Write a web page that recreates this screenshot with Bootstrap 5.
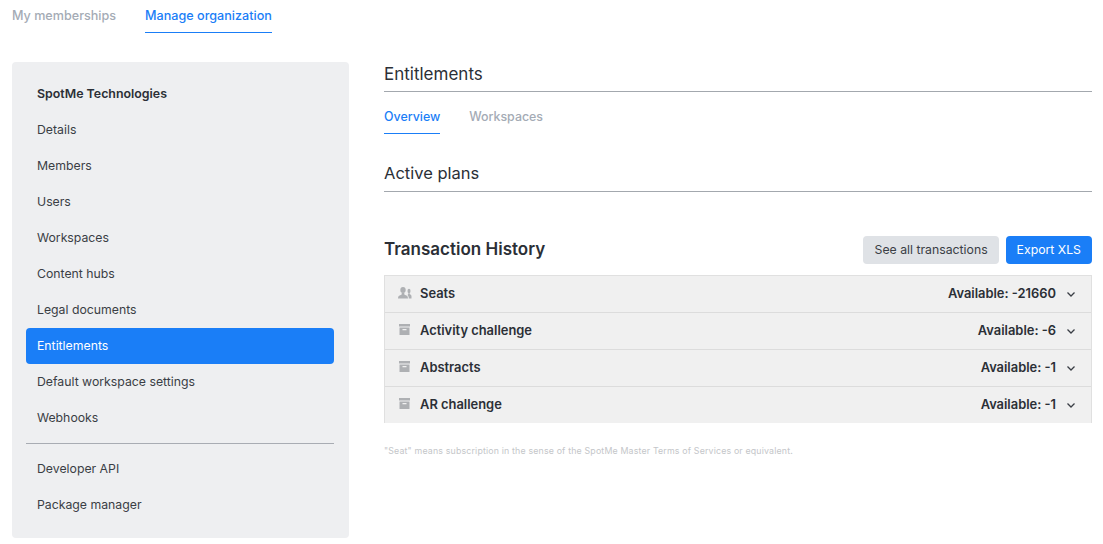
<!DOCTYPE html>
<html lang="en">
<head>
<meta charset="utf-8">
<title>Entitlements</title>
<link href="https://cdn.jsdelivr.net/npm/bootstrap@5.3.0/dist/css/bootstrap.min.css" rel="stylesheet">
<style>
body{font-family:Inter,"Liberation Sans",sans-serif;font-size:13px;color:#2b2f36;background:#fff;overflow:hidden}
.app-shell{padding:0 11px 0 12px;width:1103px;height:544px}
.tab-strip{gap:29px}
.tab-strip a{display:block;text-decoration:none;font-weight:500;font-size:12.6px;color:#a4abb5;line-height:16px}
.tab-strip a.on{color:#1a7ef7;border-bottom:1px solid #1a7ef7}
.top-tabs a{padding:8px 0 8px}
.top-tabs{height:33px}
.side-panel{width:337px;height:476px;margin-top:29px;background:#eeeff1;border-radius:4px;padding:14px 15px 14px 14px;flex:none}
.side-link{display:block;height:36px;line-height:35px;padding-left:11px;font-size:12.27px;color:#3a3e45;text-decoration:none;border-radius:4px}
.side-link.head{font-weight:600;font-size:12.4px;color:#2b2f36}
.side-link.on{background:#1a7ef7;color:#fff}
.side-rule{border:0;border-top:1px solid #a8acb3;opacity:1;margin:7px 0 6px}
.side-rule + .side-link, .side-rule + .side-link + .side-link{line-height:37px}
.main-col{width:708px;margin-left:35px;flex:none;padding-top:29px}
.sec-title{font-size:17px;font-weight:400;line-height:24px;margin:0;padding:0 0 5px;border-bottom:1px solid #a3a8ae;color:#2b2f36}
.sub-tabs{margin-top:8px;height:34px}
.sub-tabs a{padding:9px 0 8px;font-size:12.4px}
.plans-title{margin-top:27px;padding-bottom:6px;font-size:16.5px}
.hist-bar{margin-top:44px;height:28px;margin-bottom:11px}
.hist-title{font-size:17px;font-weight:600;margin:0 0 2px;line-height:26px}
.act-btn{font-size:12.27px;height:28px;padding:0 11px;line-height:26px;border-radius:4px;border:0}
.act-grey{background:#dfe2e6;color:#3a3e45;padding-left:11.5px}
.act-blue{background:#1a7ef7;color:#fff}
.btn-pair{gap:7px}
.plan-list{border:1px solid #e0e0e0;border-bottom:0}
.plan-row{height:37px;background:#f0f0f0;border-bottom:1px solid #dcdcdc;padding:0 15px 0 13px;font-weight:600;font-size:12.9px;color:#2b2f36}
.plan-row:last-child{border-bottom:0;height:36px}
.plan-ico{width:14px;height:14px;margin-right:8px;color:#aeb0b3;flex:none}
.plan-chev{width:10px;height:10px;margin-left:10px;flex:none}
.foot-note{margin-top:22px;font-size:8.8px;letter-spacing:.17px;line-height:12px;color:#c4c6c9}
</style>
</head>
<body>
<div class="app-shell">
  <nav class="tab-strip top-tabs d-flex">
    <a href="#">My memberships</a>
    <a href="#" class="on">Manage organization</a>
  </nav>
  <div class="d-flex">
    <aside class="side-panel">
      <a href="#" class="side-link head">SpotMe Technologies</a>
      <a href="#" class="side-link">Details</a>
      <a href="#" class="side-link">Members</a>
      <a href="#" class="side-link">Users</a>
      <a href="#" class="side-link">Workspaces</a>
      <a href="#" class="side-link">Content hubs</a>
      <a href="#" class="side-link">Legal documents</a>
      <a href="#" class="side-link on">Entitlements</a>
      <a href="#" class="side-link">Default workspace settings</a>
      <a href="#" class="side-link">Webhooks</a>
      <hr class="side-rule">
      <a href="#" class="side-link">Developer API</a>
      <a href="#" class="side-link">Package manager</a>
    </aside>
    <main class="main-col">
      <h2 class="sec-title">Entitlements</h2>
      <nav class="tab-strip sub-tabs d-flex">
        <a href="#" class="on">Overview</a>
        <a href="#">Workspaces</a>
      </nav>
      <h2 class="sec-title plans-title">Active plans</h2>
      <div class="hist-bar d-flex align-items-center justify-content-between">
        <h2 class="hist-title">Transaction History</h2>
        <div class="d-flex btn-pair">
          <button class="btn act-btn act-grey">See all transactions</button>
          <button class="btn act-btn act-blue">Export XLS</button>
        </div>
      </div>
      <div class="plan-list">
        <div class="plan-row d-flex align-items-center">
          <svg class="plan-ico" viewBox="0 0 14 14" fill="currentColor"><ellipse cx="5" cy="3" rx="2.700" ry="3"/><path d="M0 11.500c0-2.500 1.500-3 3.700-3.900V6h2.600v1.600c2.200.9 3.700 1.400 3.700 3.900z"/><ellipse cx="11" cy="4" rx="1.500" ry="2.200"/><path d="M10.800 11.500c0-1.700-.4-2.700-1.300-3.500l.9-.9v-1h1.200v1c1.200.5 1.900 1.100 1.900 2.400v2z"/></svg>
          <span>Seats</span>
          <span class="ms-auto">Available: -21660</span>
          <svg class="plan-chev" viewBox="0 0 10 10" fill="none" stroke="#3a3e45" stroke-width="1.300"><path d="M1.500 3.500 5 7l3.500-3.500"/></svg>
        </div>
        <div class="plan-row d-flex align-items-center">
          <svg class="plan-ico" viewBox="0 0 14 14" fill="currentColor"><path fill-rule="evenodd" d="M1 0h11v2.500H1zM1.500 3.500h10V11h-10zM4.500 5v1.200h4V5z"/></svg>
          <span>Activity challenge</span>
          <span class="ms-auto">Available: -6</span>
          <svg class="plan-chev" viewBox="0 0 10 10" fill="none" stroke="#3a3e45" stroke-width="1.300"><path d="M1.500 3.500 5 7l3.500-3.500"/></svg>
        </div>
        <div class="plan-row d-flex align-items-center">
          <svg class="plan-ico" viewBox="0 0 14 14" fill="currentColor"><path fill-rule="evenodd" d="M1 0h11v2.500H1zM1.500 3.500h10V11h-10zM4.500 5v1.200h4V5z"/></svg>
          <span>Abstracts</span>
          <span class="ms-auto">Available: -1</span>
          <svg class="plan-chev" viewBox="0 0 10 10" fill="none" stroke="#3a3e45" stroke-width="1.300"><path d="M1.500 3.500 5 7l3.500-3.500"/></svg>
        </div>
        <div class="plan-row d-flex align-items-center">
          <svg class="plan-ico" viewBox="0 0 14 14" fill="currentColor"><path fill-rule="evenodd" d="M1 0h11v2.500H1zM1.500 3.500h10V11h-10zM4.500 5v1.200h4V5z"/></svg>
          <span>AR challenge</span>
          <span class="ms-auto">Available: -1</span>
          <svg class="plan-chev" viewBox="0 0 10 10" fill="none" stroke="#3a3e45" stroke-width="1.300"><path d="M1.500 3.500 5 7l3.500-3.500"/></svg>
        </div>
      </div>
      <p class="foot-note">"Seat" means subscription in the sense of the SpotMe Master Terms of Services or equivalent.</p>
    </main>
  </div>
</div>
<script src="https://cdn.jsdelivr.net/npm/bootstrap@5.3.0/dist/js/bootstrap.bundle.min.js"></script>
</body>
</html>
